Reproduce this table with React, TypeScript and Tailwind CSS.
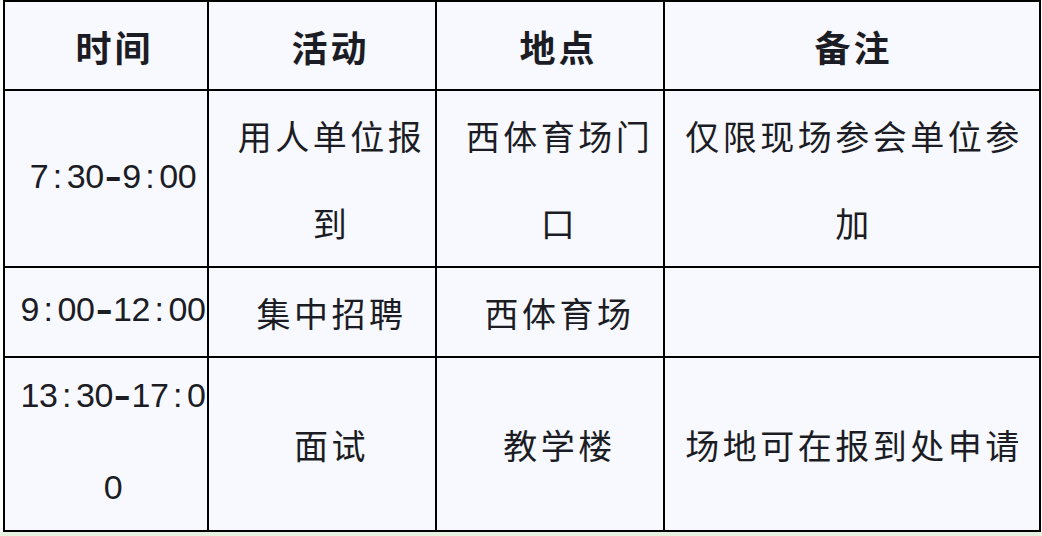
import React from 'react';

const cjk = "font-['Noto_Sans_CJK_SC','Noto_Sans',sans-serif]";

// half-width chars in the time column: every glyph takes the same width
function TimeText({ text }: { text: string }) {
  return (
    <span className="font-['Liberation_Sans',Arial,sans-serif] text-[34px]">
      {text.split('').map((ch, i) => (
        <span
          key={i}
          className={`inline-block w-[18.5px] text-center ${ch === '-' ? 'scale-x-[1.5] font-bold' : ''}`}
        >
          {ch}
        </span>
      ))}
    </span>
  );
}

function Cell({
  lines,
  time,
  className = '',
}: {
  lines: string[];
  time?: boolean;
  className?: string;
}) {
  return (
    <div className={`flex flex-col items-center justify-center bg-[#f7f9fe] ${className}`}>
      {lines.map((line, i) => (
        <div key={i} className="leading-[87px] whitespace-nowrap">
          {time ? <TimeText text={line} /> : line}
        </div>
      ))}
    </div>
  );
}

const rows: { time: string[]; act: string[]; place: string[]; note: string[]; h: string }[] = [
  {
    time: ['7:30-9:00'],
    act: ['用人单位报', '到'],
    place: ['西体育场门', '口'],
    note: ['仅限现场参会单位参', '加'],
    h: 'h-[175px]',
  },
  {
    time: ['9:00-12:00'],
    act: ['集中招聘'],
    place: ['西体育场'],
    note: [],
    h: 'h-[88px]',
  },
  {
    time: ['13:30-17:0', '0'],
    act: ['面试'],
    place: ['教学楼'],
    note: ['场地可在报到处申请'],
    h: 'h-[172px]',
  },
];

export default function App() {
  return (
    <div className="w-[1042px] h-[536px] bg-white flex flex-col overflow-hidden">
      <div className="pl-[3px]">
        <div
          className={`w-[1038px] grid grid-cols-[202px_226px_226px_374px] gap-[2px] p-[2px] bg-black text-[#1c1c24] ${cjk}`}
        >
          {['时间', '活动', '地点', '备注'].map((t, i) => (
            <div
              key={t}
              className={`h-[87px] flex items-center justify-center bg-[#f7f9fe] text-[36px] font-bold tracking-[3px] ${
                i < 3 ? 'pl-[17px]' : 'pl-[3px]'
              }`}
            >
              {t}
            </div>
          ))}
          {rows.map((r, idx) => (
            <React.Fragment key={idx}>
              <Cell lines={r.time} time className={`${r.h} pl-[14px]`} />
              <Cell lines={r.act} className={`${r.h} pl-[19px] text-[34px] tracking-[3.5px]`} />
              <Cell lines={r.place} className={`${r.h} pl-[19px] text-[34px] tracking-[3.5px]`} />
              <Cell lines={r.note} className={`${r.h} pl-[4px] text-[34px] tracking-[3.5px]`} />
            </React.Fragment>
          ))}
        </div>
      </div>
      <div className="flex-1 bg-[#e6f1e0]" />
    </div>
  );
}
